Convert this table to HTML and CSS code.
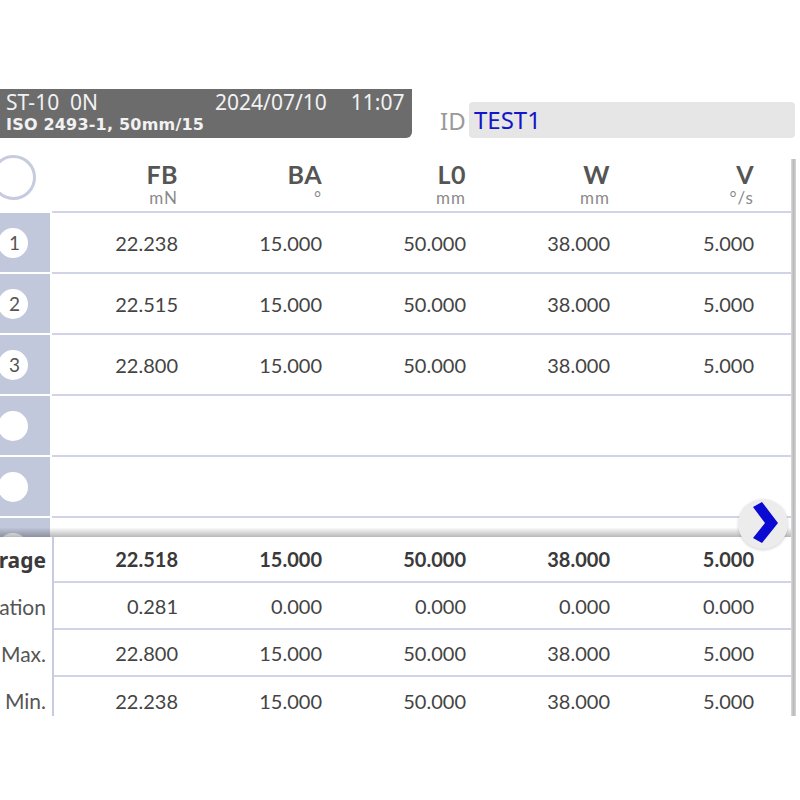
FILE: index.html
```html
<!DOCTYPE html>
<html>
<head>
<meta charset="utf-8">
<link rel="stylesheet" href="styles.css">
</head>
<body>
<div class="top">
  <div class="status">
    <div class="line1"><span>ST-10&nbsp;&nbsp;0N</span><span class="dt">2024/07/10</span><span class="tm">11:07</span></div>
    <div class="line2">ISO 2493-1, 50mm/15</div>
  </div>
  <div class="idbox">
    <span class="idlabel">ID</span>
    <div class="idfield">TEST1</div>
  </div>
</div>

<div class="panel">
  <div class="table">
    <div class="row head">
      <div class="idx blank"><div class="ring"></div></div>
      <div class="cell hc"><span class="hn">FB</span><span class="hu">mN</span></div>
      <div class="cell hc"><span class="hn">BA</span><span class="hu">°</span></div>
      <div class="cell hc"><span class="hn">L0</span><span class="hu">mm</span></div>
      <div class="cell hc"><span class="hn">W</span><span class="hu">mm</span></div>
      <div class="cell hc"><span class="hn">V</span><span class="hu">°/s</span></div>
      <div class="cell"></div>
    </div>
    <div class="body">
      <div class="row">
        <div class="idx"><div class="num">1</div></div>
        <div class="cell">22.238</div><div class="cell">15.000</div><div class="cell">50.000</div><div class="cell">38.000</div><div class="cell">5.000</div><div class="cell"></div>
      </div>
      <div class="row">
        <div class="idx"><div class="num">2</div></div>
        <div class="cell">22.515</div><div class="cell">15.000</div><div class="cell">50.000</div><div class="cell">38.000</div><div class="cell">5.000</div><div class="cell"></div>
      </div>
      <div class="row">
        <div class="idx"><div class="num">3</div></div>
        <div class="cell">22.800</div><div class="cell">15.000</div><div class="cell">50.000</div><div class="cell">38.000</div><div class="cell">5.000</div><div class="cell"></div>
      </div>
      <div class="row">
        <div class="idx"><div class="num"></div></div>
        <div class="cell"></div><div class="cell"></div><div class="cell"></div><div class="cell"></div><div class="cell"></div><div class="cell"></div>
      </div>
      <div class="row">
        <div class="idx"><div class="num"></div></div>
        <div class="cell"></div><div class="cell"></div><div class="cell"></div><div class="cell"></div><div class="cell"></div><div class="cell"></div>
      </div>
      <div class="row">
        <div class="idx"><div class="num"></div></div>
        <div class="cell"></div><div class="cell"></div><div class="cell"></div><div class="cell"></div><div class="cell"></div><div class="cell"></div>
      </div>
    </div>
    <div class="foot">
      <div class="frow bold">
        <div class="lbl"><span>Average</span></div>
        <div class="fc">22.518</div><div class="fc">15.000</div><div class="fc">50.000</div><div class="fc">38.000</div><div class="fc">5.000</div><div class="fc"></div>
      </div>
      <div class="frow">
        <div class="lbl"><span>Deviation</span></div>
        <div class="fc">0.281</div><div class="fc">0.000</div><div class="fc">0.000</div><div class="fc">0.000</div><div class="fc">0.000</div><div class="fc"></div>
      </div>
      <div class="frow">
        <div class="lbl"><span>Max.</span></div>
        <div class="fc">22.800</div><div class="fc">15.000</div><div class="fc">50.000</div><div class="fc">38.000</div><div class="fc">5.000</div><div class="fc"></div>
      </div>
      <div class="frow">
        <div class="lbl"><span>Min.</span></div>
        <div class="fc">22.238</div><div class="fc">15.000</div><div class="fc">50.000</div><div class="fc">38.000</div><div class="fc">5.000</div><div class="fc"></div>
      </div>
    </div>
    <div class="next">
      <svg width="50" height="50" viewBox="0 0 50 50"><polygon points="15,8 24,3 40,24 24,44 15,39 27,24" fill="#0a0ad2"/></svg>
    </div>
  </div>
  <div class="edge"></div>
</div>
</body>
</html>
```

FILE: styles.css
```css
* { box-sizing: border-box; }
html, body { margin: 0; padding: 0; background: #fff; }
body {
  font-family: Lato, "Noto Sans", sans-serif;
  color: #444;
  overflow: hidden;
}

.top {
  display: flex;
  align-items: flex-start;
  padding-top: 89px;
}
.status {
  width: 412px;
  height: 49px;
  background: #6c6c6c;
  border-bottom-right-radius: 6px;
  color: #f2f2f2;
  padding: 1px 0 0 6px;
}
.line1 {
  display: flex;
  font-family: "Noto Sans", sans-serif;
  font-size: 21px;
  line-height: 25px;
}
.line1 .dt { margin-left: 117px; }
.line1 .tm { margin-left: 24px; }
.line2 {
  font-family: "DejaVu Sans", sans-serif;
  font-size: 16px;
  font-weight: 700;
  line-height: 20px;
  letter-spacing: 0.2px;
}
.idbox {
  display: flex;
  align-items: center;
  margin-top: 13px;
  margin-left: 28px;
}
.idlabel {
  font-family: "Noto Sans", sans-serif;
  font-size: 24px;
  color: #9a9a9a;
  width: 29px;
}
.idfield {
  width: 326px;
  height: 36px;
  background: #e6e6e6;
  border-radius: 4px;
  font-family: "Noto Sans", sans-serif;
  font-size: 24px;
  line-height: 36px;
  color: #1515c8;
  padding-left: 5px;
}

.panel {
  display: flex;
  margin-top: 11px;
  height: 567px;
  overflow: hidden;
}
.table {
  width: 791px;
  position: relative;
  display: flex;
  flex-direction: column;
}
.edge {
  width: 5px;
  margin-top: 10px;
  background: linear-gradient(to right, #dcdcdc, #b9b9b9 50%, #d6d6d6);
}

.row {
  display: grid;
  grid-template-columns: 52px repeat(5, 144px) 1fr;
  height: 61px;
  flex-shrink: 0;
}
.row.head { height: 64px; }
.cell {
  border-bottom: 2px solid #d0d4e6;
  display: flex;
  align-items: center;
  justify-content: flex-end;
  padding-right: 18px;
  font-size: 20px;
  color: #444;
}
.idx {
  background: #c2c8dc;
  border-right: 2px solid #fff;
  border-bottom: 2px solid #fff;
  display: flex;
  align-items: center;
}
.idx.blank { background: #fff; }
.ring {
  width: 45px;
  height: 45px;
  border-radius: 50%;
  border: 3px solid #c6cbdf;
  margin-left: -9px;
  margin-top: -6px;
  flex-shrink: 0;
}
.num {
  width: 30px;
  height: 30px;
  border-radius: 50%;
  background: #fff;
  margin-left: -2px;
  flex-shrink: 0;
  display: flex;
  align-items: center;
  justify-content: center;
  font-size: 19px;
  color: #555;
  padding-left: 3px;
}
.hc {
  flex-direction: column;
  align-items: flex-end;
  justify-content: flex-start;
  padding-top: 14px;
}
.hn {
  font-size: 25px;
  font-weight: 700;
  color: #555;
  line-height: 22px;
  letter-spacing: 0.5px;
}
.hu {
  font-size: 17px;
  color: #8a8a8a;
  line-height: 16px;
  margin-top: 5px;
  letter-spacing: 1px;
}

.body {
  height: 324px;
  overflow: hidden;
  position: relative;
  flex-shrink: 0;
}
.body::after {
  content: "";
  position: absolute;
  left: 0;
  right: 0;
  bottom: 0;
  height: 9px;
  background: linear-gradient(to bottom, rgba(0,0,0,0.02), rgba(0,0,0,0.28));
}

.frow {
  display: grid;
  grid-template-columns: 54px 142px repeat(4, 144px) 1fr;
  height: 47px;
  flex-shrink: 0;
}
.frow:first-child { height: 46px; }
.lbl {
  border-right: 2px solid #c6cbdf;
  display: flex;
  align-items: center;
  justify-content: flex-end;
  padding-right: 6px;
  white-space: nowrap;
  font-size: 21px;
  color: #555;
}
.fc {
  border-bottom: 2px solid #d0d4e6;
  display: flex;
  align-items: center;
  justify-content: flex-end;
  padding-right: 18px;
  font-size: 20px;
  color: #444;
}
.frow:last-child .fc { border-bottom: none; }
.bold .fc, .bold .lbl { font-weight: 700; color: #3a3a3a; }
.bold .lbl { font-family: "Noto Sans", sans-serif; font-size: 21px; }

.next {
  position: absolute;
  left: 738px;
  top: 350px;
  width: 50px;
  height: 50px;
  border-radius: 50%;
  background: #ececec;
  box-shadow: 0 1px 3px rgba(0,0,0,0.18);
}
.next svg { display: block; }
```
